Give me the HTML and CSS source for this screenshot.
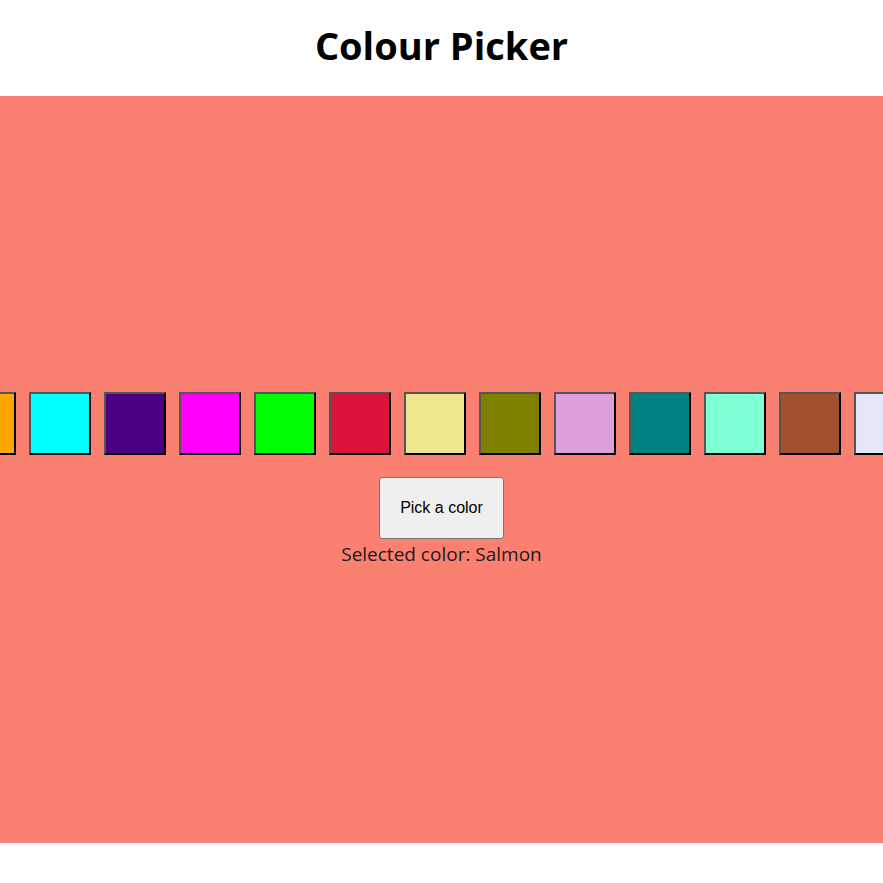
FILE: index.html
```html
<!DOCTYPE html>
<html lang="en">
<head>
<meta charset="utf-8">
<title>Colour Picker</title>
<link rel="stylesheet" href="styles.css">
</head>
<body>
<header class="header">
  <h1 class="title">Colour Picker</h1>
</header>
<main class="picker">
  <div class="swatches">
    <button class="swatch" style="background:#ffa500" aria-label="Orange"></button>
    <button class="swatch" style="background:#00ffff" aria-label="Cyan"></button>
    <button class="swatch" style="background:#4b0082" aria-label="Indigo"></button>
    <button class="swatch" style="background:#ff00ff" aria-label="Magenta"></button>
    <button class="swatch" style="background:#00ff00" aria-label="Lime"></button>
    <button class="swatch" style="background:#dc143c" aria-label="Crimson"></button>
    <button class="swatch" style="background:#f0e68c" aria-label="Khaki"></button>
    <button class="swatch" style="background:#808000" aria-label="Olive"></button>
    <button class="swatch" style="background:#dda0dd" aria-label="Plum"></button>
    <button class="swatch" style="background:#008080" aria-label="Teal"></button>
    <button class="swatch" style="background:#7fffd4" aria-label="Aquamarine"></button>
    <button class="swatch" style="background:#a0522d" aria-label="Sienna"></button>
    <button class="swatch" style="background:#e6e6fa" aria-label="Lavender"></button>
  </div>
  <button class="pick">Pick a color</button>
  <p class="selected">Selected color: Salmon</p>
</main>
</body>
</html>
```
FILE: styles.css
```css
html, body {
  margin: 0;
  padding: 0;
  background: #ffffff;
}

body {
  font-family: "Open Sans", "Noto Sans", sans-serif;
  color: #000;
}

.header {
  height: 96px;
  display: flex;
  align-items: center;
  justify-content: center;
}

.title {
  margin: 0;
  font-size: 38px;
  font-weight: 700;
  line-height: 1;
  padding-bottom: 6px;
}

.picker {
  box-sizing: border-box;
  height: 747px;
  background: #fa8072;
  padding-top: 296px;
  overflow: hidden;
  display: flex;
  flex-direction: column;
  align-items: center;
}

.swatches {
  align-self: stretch;
  display: flex;
  justify-content: center;
}

.swatch {
  flex: none;
  box-sizing: border-box;
  width: 62px;
  height: 63px;
  margin: 0 13px 0 0;
  padding: 0;
  border-style: solid;
  border-width: 2px;
  border-color: #555555 #000000 #000000 #555555;
  border-radius: 0;
}

.pick {
  margin-top: 22px;
  box-sizing: border-box;
  width: 125px;
  height: 62px;
  padding: 0;
  font-family: "Liberation Sans", Arial, sans-serif;
  font-size: 16px;
  color: #000;
  background: #efefef;
  border: 1px solid #767676;
  border-radius: 3px;
}

.selected {
  margin: 3px 0 0;
  font-size: 19px;
  line-height: 24px;
  color: #1a1a1a;
}
```
